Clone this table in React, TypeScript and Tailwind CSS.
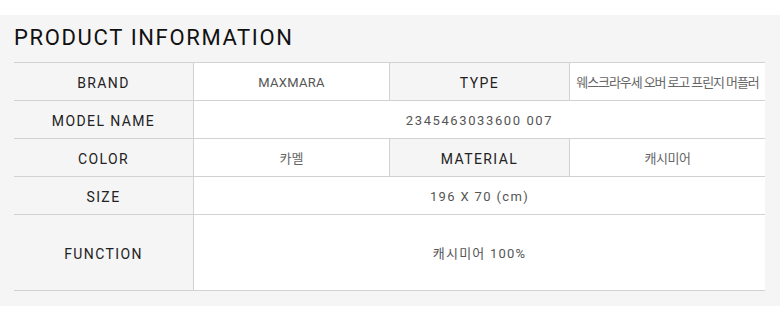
import React from "react";

const font = { fontFamily: 'Roboto, "Noto Sans CJK KR", sans-serif' };

function Label({ children, className = "" }: { children: React.ReactNode; className?: string }) {
  return (
    <div className={`flex items-center justify-center bg-[#f5f5f5] pt-[3px] text-[14px] tracking-[1.4px] text-[#222] ${className}`}>
      {children}
    </div>
  );
}

function Value({ children, className = "" }: { children: React.ReactNode; className?: string }) {
  return (
    <div className={`flex items-center justify-center bg-white pt-[3px] text-[13px] text-[#555] ${className}`}>
      {children}
    </div>
  );
}

export default function App() {
  return (
    <div className="w-[780px] h-[321px] bg-white pt-[15px]" style={font}>
      <div className="bg-[#f5f5f5] pl-[14px] pr-[15px] pb-[15px]">
        <div className="h-[47px] flex items-center pb-[2px] text-[22px] tracking-[1.65px] text-[#111]">
          PRODUCT INFORMATION
        </div>
        <div className="border-t border-[#d2d2d2]">
          <div className="flex h-[38px] border-b border-[#d2d2d2]">
            <Label className="w-[180px] border-r border-[#d2d2d2]">BRAND</Label>
            <Value className="w-[195px] tracking-[0.3px]">MAXMARA</Value>
            <Label className="w-[181px] border-l border-r border-[#d2d2d2]">TYPE</Label>
            <Value className="flex-1 text-[11.5px] tracking-[-1.1px] text-[#666]">웨스크라우세 오버 로고 프린지 머플러</Value>
          </div>
          <div className="flex h-[38px] border-b border-[#d2d2d2]">
            <Label className="w-[180px] border-r border-[#d2d2d2]">MODEL NAME</Label>
            <Value className="flex-1 tracking-[1.6px]">2345463033600 007</Value>
          </div>
          <div className="flex h-[38px] border-b border-[#d2d2d2]">
            <Label className="w-[180px] border-r border-[#d2d2d2]">COLOR</Label>
            <Value className="w-[195px] text-[12px] text-[#666]">카멜</Value>
            <Label className="w-[181px] border-l border-r border-[#d2d2d2]">MATERIAL</Label>
            <Value className="flex-1 text-[11px] tracking-[-0.5px] text-[#666]">캐시미어</Value>
          </div>
          <div className="flex h-[38px] border-b border-[#d2d2d2]">
            <Label className="w-[180px] border-r border-[#d2d2d2]">SIZE</Label>
            <Value className="flex-1 tracking-[1.35px]">196 X 70 (cm)</Value>
          </div>
          <div className="flex h-[76px] border-b border-[#d2d2d2]">
            <Label className="w-[180px] border-r border-[#d2d2d2]">FUNCTION</Label>
            <Value className="flex-1 tracking-[1.2px]">캐시미어 100%</Value>
          </div>
        </div>
      </div>
    </div>
  );
}
